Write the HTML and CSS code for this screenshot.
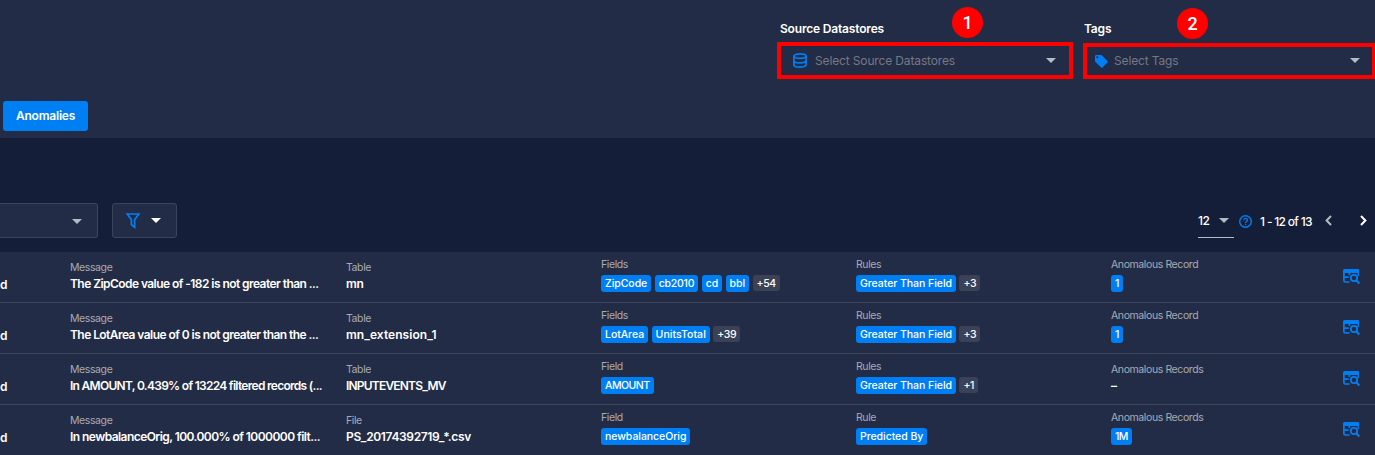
FILE: index.html
```html
<!DOCTYPE html>
<html lang="en">
<head>
<meta charset="utf-8">
<title>Anomalies</title>
<link rel="stylesheet" href="styles.css">
</head>
<body>
<svg class="defs" aria-hidden="true">
  <symbol id="inspect" viewBox="0 0 17 16">
    <path d="M1.6 0H15.2Q16 0 16 .8V4H0V1.6Q0 0 1.6 0Z" fill="currentColor"/>
    <path d="M.9 3V11.6Q.9 13 2.3 13H6.6M1 8.2H5.6M6.4 4V6" fill="none" stroke="currentColor" stroke-width="1.7"/>
    <circle cx="11" cy="9" r="4.9" fill="#232c46"/>
    <path d="M15.3 3V7" stroke="currentColor" stroke-width="1.4"/>
    <circle cx="11" cy="9" r="3.2" fill="none" stroke="currentColor" stroke-width="1.8"/>
    <path d="M13.2 11.2L16.3 14.5" stroke="currentColor" stroke-width="2"/>
  </symbol>
</svg>
<header class="top">
  <div class="filters">
    <div class="filter source">
      <div class="label">Source Datastores</div>
      <div class="select">
        <svg class="db" viewBox="0 0 14 15"><g fill="none" stroke="currentColor" stroke-width="1.7"><ellipse cx="7" cy="3.1" rx="6.1" ry="2.3"/><path d="M.9 3.1V11.7C.9 15 13.1 15 13.1 11.7V3.1M.9 7.4C.9 10.6 13.1 10.6 13.1 7.4"/></g></svg>
        <span class="ph">Select Source Datastores</span><i class="caret"></i>
      </div>
      <b class="badge">1</b>
    </div>
    <div class="filter tags">
      <div class="label">Tags</div>
      <div class="select">
        <svg class="tag" viewBox="0 0 13 13"><path fill="currentColor" fill-rule="evenodd" d="M1.3 0H6Q6.6 0 7 .4L12.5 6Q13.2 6.7 12.5 7.4L7.5 12.5Q6.8 13.2 6.1 12.5L.5 7Q0 6.5 0 5.9V1.3Q0 0 1.3 0ZM2.3 1.3A1 1 0 1 0 2.3 3.3A1 1 0 1 0 2.3 1.3Z"/></svg>
        <span class="ph">Select Tags</span><i class="caret"></i>
      </div>
      <b class="badge">2</b>
    </div>
  </div>
  <button class="tab">Anomalies</button>
</header>
<section class="toolbar">
  <div class="box sort"><i class="caret"></i></div>
  <div class="box funnel">
    <svg viewBox="0 0 14 16"><path d="M1.2 1H12.8L8.6 6.8V14.2L5.4 11.6V6.8Z" fill="none" stroke="currentColor" stroke-width="1.7"/></svg>
    <i class="caret white"></i>
  </div>
  <div class="pager">
    <div class="size"><span>12</span><i class="caret"></i></div>
    <svg class="help" viewBox="0 0 13 13"><circle cx="6.5" cy="6.5" r="5.8" fill="none" stroke="currentColor" stroke-width="1.4"/><path d="M4.7 5.2C4.7 2.7 8.4 2.8 8.4 5C8.4 6.4 6.5 6.4 6.5 7.9" fill="none" stroke="currentColor" stroke-width="1.3"/><path d="M5.9 8.8H7.1V10H5.9Z" fill="currentColor"/></svg>
    <span class="range">1 - 12 of 13</span>
    <svg class="arrow prev" viewBox="0 0 7 11"><path d="M6 1L1.6 5.5L6 10" fill="none" stroke="currentColor" stroke-width="2"/></svg>
    <svg class="arrow" viewBox="0 0 7 11"><path d="M1 1L5.4 5.5L1 10" fill="none" stroke="currentColor" stroke-width="2"/></svg>
  </div>
</section>
<main class="list">
  <div class="row">
    <div class="tail">d</div>
    <div class="cell"><small>Message</small><strong class="message">The ZipCode value of -182 is not greater than ...</strong></div>
    <div class="cell"><small>Table</small><strong>mn</strong></div>
    <div class="cell chips"><small>Fields</small><div><span>ZipCode</span><span class="tight">cb2010</span><span>cd</span><span>bbl</span><em>+54</em></div></div>
    <div class="cell chips"><small>Rules</small><div><span>Greater Than Field</span><em>+3</em></div></div>
    <div class="cell chips"><small>Anomalous Record</small><div><span>1</span></div></div>
    <svg class="inspect"><use href="#inspect"/></svg>
  </div>
  <div class="row">
    <div class="tail">d</div>
    <div class="cell"><small>Message</small><strong class="message">The LotArea value of 0 is not greater than the ...</strong></div>
    <div class="cell"><small>Table</small><strong class="wide">mn_extension_1</strong></div>
    <div class="cell chips"><small>Fields</small><div><span>LotArea</span><span class="open">UnitsTotal</span><em>+39</em></div></div>
    <div class="cell chips"><small>Rules</small><div><span>Greater Than Field</span><em>+3</em></div></div>
    <div class="cell chips"><small>Anomalous Record</small><div><span>1</span></div></div>
    <svg class="inspect"><use href="#inspect"/></svg>
  </div>
  <div class="row">
    <div class="tail">d</div>
    <div class="cell"><small>Message</small><strong class="message dense">In AMOUNT, 0.439% of 13224 filtered records (...</strong></div>
    <div class="cell"><small>Table</small><strong class="caps">INPUTEVENTS_MV</strong></div>
    <div class="cell chips"><small>Field</small><div><span class="tighter">AMOUNT</span></div></div>
    <div class="cell chips"><small>Rules</small><div><span>Greater Than Field</span><em>+1</em></div></div>
    <div class="cell"><small>Anomalous Records</small><strong>–</strong></div>
    <svg class="inspect"><use href="#inspect"/></svg>
  </div>
  <div class="row">
    <div class="tail">d</div>
    <div class="cell"><small>Message</small><strong class="message">In newbalanceOrig, 100.000% of 1000000 filt...</strong></div>
    <div class="cell"><small>File</small><strong class="file">PS_20174392719_*.csv</strong></div>
    <div class="cell chips"><small>Field</small><div><span>newbalanceOrig</span></div></div>
    <div class="cell chips"><small>Rule</small><div><span>Predicted By</span></div></div>
    <div class="cell chips"><small>Anomalous Records</small><div><span class="tighter">1M</span></div></div>
    <svg class="inspect"><use href="#inspect"/></svg>
  </div>
</main>
</body>
</html>
```
FILE: styles.css
```css
* { box-sizing: border-box; }
body { margin: 0; height: 455px; overflow: hidden; background: #151e39; color: #fff; font-family: Inter, "Liberation Sans", sans-serif; }
.defs { position: absolute; width: 0; height: 0; }
svg { color: #007ff5; display: block; flex: none; overflow: visible; }
.caret { flex: none; width: 0; height: 0; border: 5px solid transparent; border-top-color: #b5b9c1; border-bottom: 0; }
.caret.white { border-top-color: #fff; }

.top { height: 138px; background: #232c46; }
.filters { height: 101px; display: flex; justify-content: flex-end; gap: 10px; padding-top: 21px; }
.filter { position: relative; width: 296px; }
.filter.tags { width: 292px; }
.label { height: 21px; padding-left: 3px; font-size: 12px; line-height: 16px; font-weight: 600; letter-spacing: -.18px; }
.tags .label { height: 22px; padding-left: 1px; }
.select { height: 37px; border: 4px solid #f00; display: flex; align-items: center; padding: 0 13px 0 12px; }
.tags .select { height: 36px; padding: 0 12px 1px 8px; border-right-width: 3px; }
.db { width: 14px; height: 15px; margin-right: 8px; }
.tag { width: 13px; height: 13px; margin: 1px 6px 0 0; }
.ph { flex: 1; font-size: 12px; color: #757982; letter-spacing: -.14px; }
.badge { position: absolute; left: 175px; top: -14px; width: 31px; height: 31px; border-radius: 50%; background: #f00; font: 500 18px/31px Roboto, sans-serif; text-align: center; }
.tags .badge { left: 94px; top: -13px; }
.tab { display: block; margin-left: 3px; width: 85px; height: 30px; padding: 0; border: 0; border-radius: 3px; background: #007ff5; color: #fff; font: 600 12px/30px Inter, sans-serif; letter-spacing: -.2px; }

.toolbar { height: 114px; padding-top: 65px; display: flex; }
.box { height: 35px; border: 1px solid #3c445a; background: #232c46; border-radius: 3px; display: flex; align-items: center; }
.sort { width: 98px; border-left: 0; border-radius: 0 3px 3px 0; justify-content: flex-end; padding: 1px 15px 0 0; }
.funnel { width: 65px; margin-left: 14px; padding-left: 13px; }
.funnel svg { width: 14px; height: 16px; margin-right: 11px; }
.pager { margin-left: auto; height: 35px; display: flex; align-items: center; font-size: 12px; font-weight: 500; padding-right: 8px; }
.size { width: 36px; height: 35px; border-bottom: 1px solid #b5b9c1; display: flex; align-items: center; justify-content: space-between; padding: 1px 5px 0 0; letter-spacing: -.5px; }
.help { width: 13px; height: 13px; margin: 1px 8px 0 5px; }
.range { width: 65px; letter-spacing: -.8px; word-spacing: .3px; white-space: nowrap; padding-top: 1px; }
.arrow { width: 7px; height: 11px; color: #fff; }
.prev { color: #b5b9c1; margin-right: 28px; }

.row { height: 51px; border-bottom: 1px solid #3d465c; background: #232c46; display: grid; grid-template-columns: 70px 276px 255px 255px 255px 232px 17px; }
.row:last-child { border-bottom: 0; }
.tail { font-size: 12px; line-height: 16px; font-weight: 600; padding-top: 25px; }
.cell { padding-top: 9px; white-space: nowrap; }
.cell small { display: block; height: 14px; font-size: 10.5px; line-height: 13px; color: #a7abb5; letter-spacing: -.4px; }
.cell strong { display: block; font-size: 12px; line-height: 17px; font-weight: 600; letter-spacing: -.3px; }
.cell .message { letter-spacing: -.56px; }
.cell .dense { letter-spacing: -.71px; }
.cell .wide { letter-spacing: .05px; }
.cell .caps { letter-spacing: -.8px; }
.cell .file { letter-spacing: -.35px; }
.chips { padding-top: 6px; }
.chips small { height: 17px; }
.chips div { display: flex; gap: 3.5px; }
.chips span, .chips em { height: 17px; padding: 0 4px; border-radius: 3px; background: #007ff5; font: 500 10.5px/17px Inter, sans-serif; letter-spacing: -.05px; }
.chips .tight { letter-spacing: -.25px; }
.chips .tighter { letter-spacing: -.5px; }
.chips .open { letter-spacing: .06px; }
.chips em { height: 16px; background: #3b4258; line-height: 17px; letter-spacing: -.4px; }
.inspect { width: 17px; height: 16px; margin-top: 17px; }
```
